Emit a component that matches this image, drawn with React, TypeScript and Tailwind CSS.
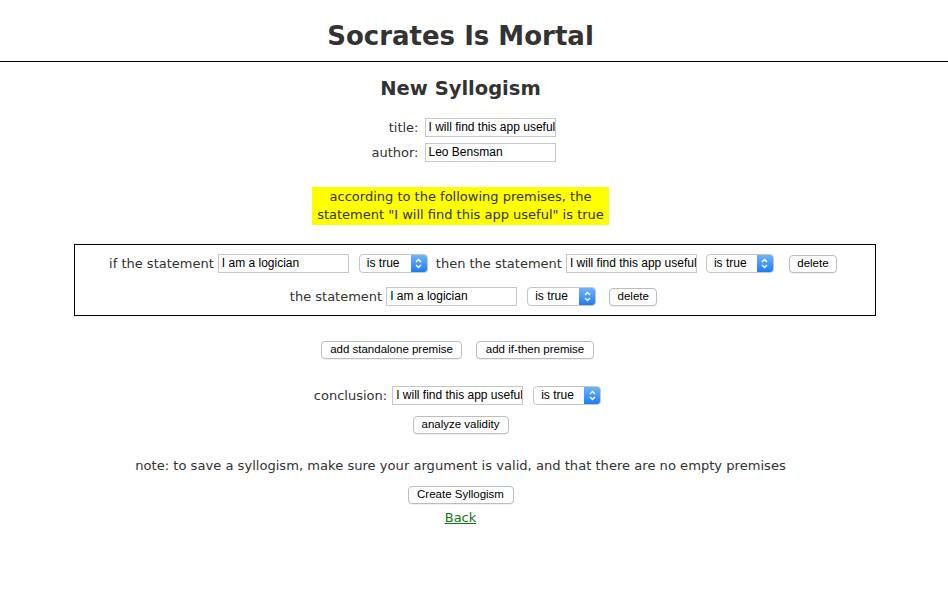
const FONT = "font-['DejaVu_Sans','Verdana',sans-serif]";
const UI = "font-['Liberation_Sans','Arial',sans-serif]";

function TextBox({ value, w = "w-[131px]" }: { value: string; w?: string }) {
  return (
    <div
      className={`${w} ${UI} h-[19px] border border-[#c8c8c8] bg-white px-[3px] text-[12px] leading-[17px] text-black overflow-hidden whitespace-nowrap`}
    >
      {value}
    </div>
  );
}

function Select({ w = "w-[69px]" }: { w?: string }) {
  return (
    <div
      className={`${w} ${UI} flex h-[19px] items-stretch overflow-hidden rounded-[4px] border border-[#c6c6c6] bg-white text-[12px] text-black`}
    >
      <span className="flex-1 pl-[7px] leading-[17px]">is true</span>
      <span className="flex w-[16px] items-center justify-center bg-gradient-to-b from-[#6cb3fa] to-[#1b7cf5]">
        <svg width="7" height="11" viewBox="0 0 7 11" fill="none" stroke="white" strokeWidth="1.3">
          <path d="M1 4 L3.5 1.5 L6 4" />
          <path d="M1 7 L3.5 9.5 L6 7" />
        </svg>
      </span>
    </div>
  );
}

function Button({ label, w }: { label: string; w: string }) {
  return (
    <div
      className={`${w} ${UI} flex h-[18px] items-center justify-center rounded-[4px] border border-[#bdbdbd] bg-white text-[11.5px] text-black shadow-[0_1px_0_rgba(0,0,0,0.06)]`}
    >
      {label}
    </div>
  );
}

export default function App() {
  return (
    <div className={`${FONT} min-h-[599px] w-[948px] bg-white text-[13px] text-[#333]`}>
      <header className="flex h-[62px] items-center justify-center border-b border-black pt-[12px] pr-[27px]">
        <h1 className="text-[26px] font-bold text-[#333]">Socrates Is Mortal</h1>
      </header>

      <div className="flex flex-col items-center pr-[27px]">
        <h2 className="mt-[13px] h-[28px] text-[19.5px] font-bold leading-[28px]">New Syllogism</h2>

        <div className="mt-[15px] ml-[6px] grid grid-cols-[auto_auto] items-center gap-x-[6px] gap-y-[6px] leading-[19px]">
          <span className="text-right">title:</span>
          <TextBox value="I will find this app useful" />
          <span className="text-right">author:</span>
          <TextBox value="Leo Bensman" />
        </div>

        <div className="mt-[25px] bg-[#ffff00] px-[5px] py-[1px] text-center leading-[18px]">
          according to the following premises, the
          <br />
          statement "I will find this app useful" is true
        </div>

        <div className="mt-[19px] mr-[-29px] flex w-[802px] flex-col items-center gap-[14px] border border-black pt-[9px] pb-[9px] leading-[19px]">
          <div className="mr-[4px] flex items-center">
            <span className="mr-[4px]">if the statement</span>
            <TextBox value="I am a logician" />
            <span className="ml-[10px]"><Select /></span>
            <span className="ml-[8px] mr-[4px]">then the statement</span>
            <TextBox value="I will find this app useful" />
            <span className="ml-[9px]"><Select w="w-[68px]" /></span>
            <span className="ml-[15px]"><Button label="delete" w="w-[48px]" /></span>
          </div>
          <div className="mr-[3px] flex items-center">
            <span className="mr-[4px]">the statement</span>
            <TextBox value="I am a logician" />
            <span className="ml-[10px]"><Select /></span>
            <span className="ml-[13px]"><Button label="delete" w="w-[48px]" /></span>
          </div>
        </div>

        <div className="mt-[25px] mr-[6px] flex items-center gap-[14px]">
          <Button label="add standalone premise" w="w-[141px]" />
          <Button label="add if-then premise" w="w-[118px]" />
        </div>

        <div className="mt-[27px] mr-[6px] flex items-center">
          <span className="mr-[5px]">conclusion:</span>
          <TextBox value="I will find this app useful" />
          <span className="ml-[10px]"><Select w="w-[68px]" /></span>
        </div>

        <div className="mt-[10px]">
          <Button label="analyze validity" w="w-[96px]" />
        </div>

        <p className="mt-[23px] text-[13.1px] leading-[18px]">
          note: to save a syllogism, make sure your argument is valid, and that there are no empty premises
        </p>

        <div className="mt-[11px]">
          <Button label="Create Syllogism" w="w-[106px]" />
        </div>

        <a href="#" className="mt-[4px] text-[13px] text-[#0f7a0f] underline">
          Back
        </a>
      </div>
    </div>
  );
}
